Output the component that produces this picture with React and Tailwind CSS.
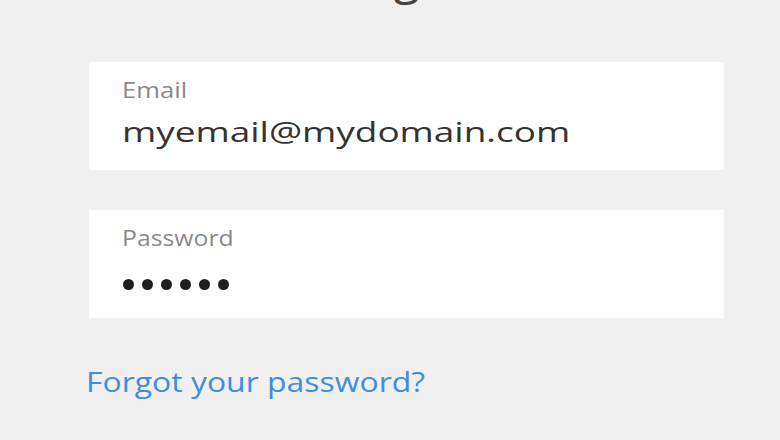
export default function App() {
  const font = { fontFamily: '"Open Sans", "Noto Sans", sans-serif' };
  const Dot = () => <span className="w-[11px] h-[11px] rounded-full bg-[#1e1e1e]" />;
  return (
    <div className="w-[780px] h-[440px] bg-[#f0f0f0] overflow-hidden" style={font}>
      <div className="flex justify-center pl-[33px] -mt-[48px] h-[48px] text-[48px] leading-[48px] text-[#444]">
        Log in
      </div>
      <div className="ml-[89px] w-[635px] mt-[62px] flex flex-col gap-[40px]">
        <div className="h-[108px] bg-white px-[33px] pt-[14px]">
          <div className="text-[21px] leading-[28px] text-[#8a8a8a]">
            <span className="inline-block origin-left scale-x-[1.22]">Email</span>
          </div>
          <div className="mt-[5px] text-[28px] leading-[44px] text-[#333333] whitespace-nowrap">
            <span className="inline-block origin-left scale-x-[1.32]">myemail@mydomain.com</span>
          </div>
        </div>
        <div className="h-[108px] bg-white px-[33px] pt-[14px]">
          <div className="text-[21px] leading-[28px] text-[#8a8a8a]">
            <span className="inline-block origin-left scale-x-[1.18]">Password</span>
          </div>
          <div className="mt-[10px] flex gap-[8px] items-center h-[44px] pl-[1px]">
            <Dot />
            <Dot />
            <Dot />
            <Dot />
            <Dot />
            <Dot />
          </div>
        </div>
      </div>
      <div className="ml-[86px] mt-[43px] text-[28px] leading-[40px] text-[#3f8ddb] whitespace-nowrap">
        <span className="inline-block origin-left scale-x-[1.14]">Forgot your password?</span>
      </div>
    </div>
  );
}
